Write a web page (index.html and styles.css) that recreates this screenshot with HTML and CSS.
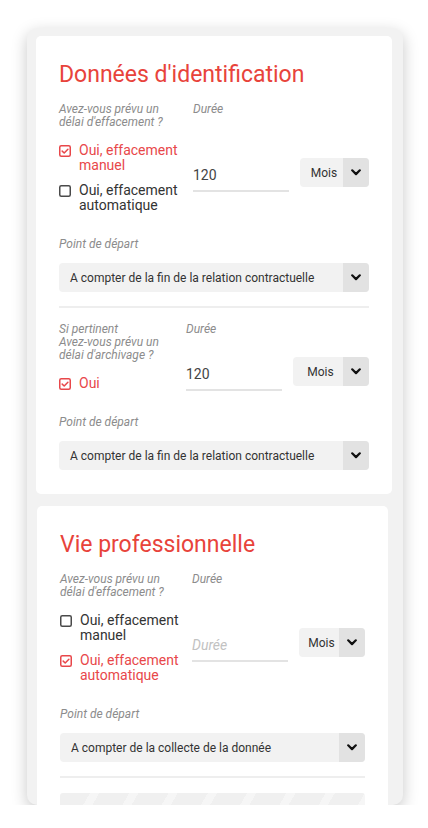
FILE: index.html
```html
<!DOCTYPE html>
<html lang="fr">
<head>
  <meta charset="UTF-8">
  <title>Durées de conservation</title>
  <meta name="viewport" content="width=device-width, initial-scale=1.0">
  <link rel="stylesheet" href="styles.css">
</head>
<body>
  <div class="frame">

    <!-- Carte 1 -->
    <section class="card">
      <h2 class="card-title">Données d'identification</h2>

      <div class="block">
        <div class="col-q">
          <p class="hint">Avez-vous prévu un<br>délai d'effacement ?</p>
          <div class="options">
            <label class="check is-checked">
              <svg viewBox="0 0 12 12"><rect x="0.75" y="0.75" width="10.5" height="10.5" rx="1.5"/><polyline points="3.2,6.1 5.2,8 8.9,4.2"/></svg>
              <span>Oui, effacement manuel</span>
            </label>
            <label class="check">
              <svg viewBox="0 0 12 12"><rect x="0.75" y="0.75" width="10.5" height="10.5" rx="1.5"/></svg>
              <span>Oui, effacement automatique</span>
            </label>
          </div>
        </div>
        <div class="col-d">
          <p class="hint">Durée</p>
          <div class="duration">
            <input class="duration-input" type="text" value="120" placeholder="Durée">
            <div class="unit-select">
              <span class="unit-value">Mois</span>
              <span class="select-arrow"><svg viewBox="0 0 10 7"><polyline points="1.2,1.3 5,5.1 8.8,1.3"/></svg></span>
            </div>
          </div>
        </div>
      </div>

      <p class="hint start-label">Point de départ</p>
      <div class="select">
        <span class="select-value">A compter de la fin de la relation contractuelle</span>
        <span class="select-arrow"><svg viewBox="0 0 10 7"><polyline points="1.2,1.3 5,5.1 8.8,1.3"/></svg></span>
      </div>

      <hr class="divider">

      <div class="block">
        <div class="col-q col-q--narrow">
          <p class="hint">Si pertinent<br>Avez-vous prévu un<br>délai d'archivage ?</p>
          <div class="options">
            <label class="check is-checked">
              <svg viewBox="0 0 12 12"><rect x="0.75" y="0.75" width="10.5" height="10.5" rx="1.5"/><polyline points="3.2,6.1 5.2,8 8.9,4.2"/></svg>
              <span>Oui</span>
            </label>
          </div>
        </div>
        <div class="col-d">
          <p class="hint">Durée</p>
          <div class="duration duration--tight">
            <input class="duration-input" type="text" value="120" placeholder="Durée">
            <div class="unit-select">
              <span class="unit-value">Mois</span>
              <span class="select-arrow"><svg viewBox="0 0 10 7"><polyline points="1.2,1.3 5,5.1 8.8,1.3"/></svg></span>
            </div>
          </div>
        </div>
      </div>

      <p class="hint start-label">Point de départ</p>
      <div class="select">
        <span class="select-value">A compter de la fin de la relation contractuelle</span>
        <span class="select-arrow"><svg viewBox="0 0 10 7"><polyline points="1.2,1.3 5,5.1 8.8,1.3"/></svg></span>
      </div>
    </section>

    <!-- Carte 2 -->
    <section class="card card--narrow">
      <h2 class="card-title">Vie professionnelle</h2>

      <div class="block">
        <div class="col-q col-q--mid">
          <p class="hint">Avez-vous prévu un<br>délai d'effacement ?</p>
          <div class="options">
            <label class="check">
              <svg viewBox="0 0 12 12"><rect x="0.75" y="0.75" width="10.5" height="10.5" rx="1.5"/></svg>
              <span>Oui, effacement manuel</span>
            </label>
            <label class="check is-checked">
              <svg viewBox="0 0 12 12"><rect x="0.75" y="0.75" width="10.5" height="10.5" rx="1.5"/><polyline points="3.2,6.1 5.2,8 8.9,4.2"/></svg>
              <span>Oui, effacement automatique</span>
            </label>
          </div>
        </div>
        <div class="col-d">
          <p class="hint">Durée</p>
          <div class="duration">
            <input class="duration-input" type="text" value="" placeholder="Durée">
            <div class="unit-select">
              <span class="unit-value">Mois</span>
              <span class="select-arrow"><svg viewBox="0 0 10 7"><polyline points="1.2,1.3 5,5.1 8.8,1.3"/></svg></span>
            </div>
          </div>
        </div>
      </div>

      <p class="hint start-label">Point de départ</p>
      <div class="select">
        <span class="select-value">A compter de la collecte de la donnée</span>
        <span class="select-arrow"><svg viewBox="0 0 10 7"><polyline points="1.2,1.3 5,5.1 8.8,1.3"/></svg></span>
      </div>

      <hr class="divider">

      <div class="skeleton"></div>
    </section>

  </div>
</body>
</html>
```

FILE: styles.css
```css
body {
  margin: 0;
  background: #ffffff;
  font-family: Roboto, "Noto Sans", "Liberation Sans", sans-serif;
}

/* cadre gris autour des cartes */
.frame {
  width: 376px;
  height: 777px;
  margin: 28px 0 0 27px;
  padding: 8px 11px 0 9px;
  box-sizing: border-box;
  background: #f2f2f2;
  border-radius: 10px;
  box-shadow: 0 5px 16px rgba(0, 0, 0, 0.22);
  overflow: hidden;
}

.card {
  background: #ffffff;
  border-radius: 5px;
  padding: 25px 23px 24px;
}

.card--narrow {
  margin: 12px 4px 0 1px;
}

.card-title {
  margin: 0 0 15px;
  font-size: 23px;
  line-height: 27px;
  font-weight: 400;
  color: #e8433b;
}

.hint {
  margin: 0;
  font-size: 12px;
  line-height: 13px;
  font-style: italic;
  color: #8c8c8c;
}

.block {
  display: flex;
}

.col-q {
  width: 134px;
  flex: none;
}

.col-q--narrow {
  width: 127px;
}

.col-q--mid {
  width: 132px;
}

.col-d {
  flex: 1;
  min-width: 0;
}

.options {
  margin-top: 14px;
  display: flex;
  flex-direction: column;
  gap: 10px;
}

.check {
  display: flex;
  align-items: flex-start;
  gap: 8px;
  font-size: 14px;
  line-height: 15px;
  color: #333333;
  cursor: pointer;
}

.check svg {
  flex: none;
  width: 12px;
  height: 12px;
  margin-top: 2px;
  fill: none;
  stroke: #4a4a4a;
  stroke-width: 1.5;
}

.check svg polyline {
  stroke-linecap: round;
  stroke-linejoin: round;
}

.check.is-checked {
  color: #e8474a;
}

.check.is-checked svg {
  stroke: #e8474a;
}

.duration {
  display: flex;
  align-items: flex-start;
  gap: 11px;
  margin-top: 42px;
}

.duration--tight {
  margin-top: 21px;
}

.duration-input {
  width: 96px;
  height: 32px;
  margin-top: 2px;
  padding: 0;
  box-sizing: border-box;
  border: 0;
  border-bottom: 2px solid #e3e3e3;
  background: transparent;
  font-family: inherit;
  font-size: 14px;
  color: #444444;
  outline: none;
}

.duration-input::placeholder {
  font-style: italic;
  color: #c2c2c2;
}

.unit-select,
.select {
  display: flex;
  height: 29px;
  background: #f2f2f2;
  border-radius: 4px;
  overflow: hidden;
}

.unit-select {
  flex: 1;
}

.unit-value {
  flex: 1;
  display: flex;
  align-items: center;
  justify-content: center;
  padding-left: 5px;
  font-size: 12px;
  color: #333333;
}

.select {
  margin-top: 12px;
}

.select-value {
  flex: 1;
  display: flex;
  align-items: center;
  padding-left: 11px;
  font-size: 12px;
  color: #333333;
  white-space: nowrap;
}

.select-arrow {
  flex: none;
  width: 26px;
  display: flex;
  align-items: center;
  justify-content: center;
  background: #e2e2e2;
}

.select-arrow svg {
  width: 10px;
  height: 7px;
  fill: none;
  stroke: #111111;
  stroke-width: 2.2;
  stroke-linecap: round;
  stroke-linejoin: round;
}

.start-label {
  margin-top: 25px;
}

.divider {
  height: 2px;
  margin: 14px 0 15px;
  border: 0;
  background: #eeeeee;
}

/* bloc en chargement, rayé */
.skeleton {
  height: 40px;
  border-radius: 3px;
  background: repeating-linear-gradient(120deg, #f0f0f0 0 26px, #f6f6f6 26px 34px);
}
```
